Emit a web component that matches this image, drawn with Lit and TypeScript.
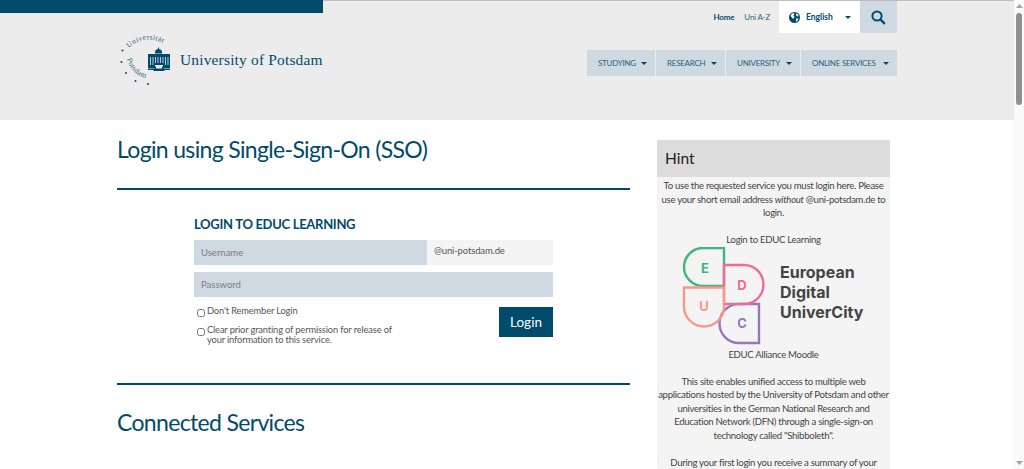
import { LitElement, css, html, svg } from 'lit'
import { customElement } from 'lit/decorators.js'

const caret = html`<svg class="caret" width="6" height="3" viewBox="0 0 6 3"><path d="M0 0h6L3 3z" /></svg>`

const sealLogo = svg`
  <defs>
    <path id="arc-top" d="M12 20 A28 28 0 0 1 50 18" />
    <path id="arc-bottom" d="M10 31 A26 26 0 0 0 34 51" />
  </defs>
  <text class="seal-text"><textPath href="#arc-top">Universität</textPath></text>
  <text class="seal-text"><textPath href="#arc-bottom">Potsdam</textPath></text>
  <g fill="#004a6c">
    <circle cx="5.500" cy="22.500" r="1" />
    <circle cx="4.500" cy="34" r="1" />
    <circle cx="9" cy="45" r="1" />
    <circle cx="18.500" cy="53" r="1" />
    <circle cx="31" cy="56" r="1" />
    <path d="M38 25.500h7v-1a3.500 3.500 0 0 0-3-3.500v-1.500h-1V21a3.500 3.500 0 0 0-3 3.500z" />
    <path d="M31 26h22v14h-7v-3h-8v3h-7z" />
    <path d="M31 40.500h6.500v-2H39v2h6v-2h1.500v2H53V42h-5l-1 1h-10l-1-1h-5z" />
  </g>
  <g stroke="#ececec" stroke-width=".8">
    <path d="M33.500 29v8M36 29v8M38.500 29v6M41 29v6M43.500 29v6M46 29v6M48.500 29v8M51 29v8" />
  </g>
`

const educLogo = svg`
  <g fill="none" stroke-width="2.400">
    <path stroke="#9577c0" d="M759 304v39h-20a19.500 19.500 0 0 1 0-39z" />
    <path stroke="#3fb67f" d="M724 248v38h-21a19 19 0 0 1 0-38z" />
    <path stroke="#ee6b96" d="M724 265h20a19.500 19.500 0 0 1 0 39h-20z" />
    <path stroke="#f79a83" d="M684 287.500h40v19a20 20 0 0 1-40 0z" />
  </g>
  <text class="educ-letter" x="705" y="273" fill="#3fb67f">E</text>
  <text class="educ-letter" x="742" y="290" fill="#ee6b96">D</text>
  <text class="educ-letter" x="704" y="311" fill="#f79a83">U</text>
  <text class="educ-letter" x="742" y="328" fill="#9577c0">C</text>
`

@customElement('app-root')
export class AppRoot extends LitElement {
  render() {
    const nav = ['Studying', 'Research', 'University', 'Online Services']
    return html`
      <div class="page">
        <div class="content">
          <header class="site-header">
            <div class="top-line"><div class="top-bar"></div></div>
            <div class="header-inner">
              <div class="brand">
                <svg class="seal" width="56" height="60" viewBox="0 0 56 60">${sealLogo}</svg>
                <span class="brand-name">University of Potsdam</span>
              </div>
              <div class="header-right">
                <div class="meta-row">
                  <a class="meta-link home">Home</a>
                  <a class="meta-link">Uni A-Z</a>
                  <div class="lang">
                    <svg width="11" height="11" viewBox="0 0 11 11">
                      <circle cx="5.500" cy="5.500" r="5.500" fill="#004a6c" />
                      <path fill="#fff" d="M2.500 2l2-1 1 1-1 1.500L5.500 5 4 7 2.500 5 1.500 4zM7 1.500l2 1 .5 1.500-1.500.5-1-1.500zM7 6.500h2.500L8 9.500H7z" />
                    </svg>
                    <span>English</span>
                    ${caret}
                  </div>
                  <div class="search">
                    <svg width="15" height="15" viewBox="0 0 15 15" fill="none" stroke="#004a6c">
                      <circle cx="6" cy="6" r="4.600" stroke-width="2" />
                      <path d="M9.500 9.500l4.300 4.300" stroke-width="2.400" />
                    </svg>
                  </div>
                </div>
                <nav class="main-nav">
                  ${nav.map((item) => html`<a class="nav-item">${item}${caret}</a>`)}
                </nav>
              </div>
            </div>
          </header>

          <div class="columns">
            <main class="main-col">
              <h1>Login using Single-Sign-On (SSO)</h1>
              <hr />
              <form class="login">
                <h2>Login to EDUC Learning</h2>
                <div class="user-row">
                  <div class="field grow">Username</div>
                  <div class="domain">@uni-potsdam.de</div>
                </div>
                <div class="field">Password</div>
                <div class="form-foot">
                  <div class="options">
                    <label><input type="checkbox" /><span>Don't Remember Login</span></label>
                    <label><input type="checkbox" /><span>Clear prior granting of permission for release of your information to this service.</span></label>
                  </div>
                  <button type="button">Login</button>
                </div>
              </form>
              <hr class="second" />
              <h1 class="services">Connected Services</h1>
            </main>

            <aside class="hint">
              <h3>Hint</h3>
              <div class="hint-body">
                <p>To use the requested service you must login here. Please use your short email address <em>without</em> @uni-potsdam.de to login.</p>
                <p class="gap">Login to EDUC Learning</p>
                <div class="educ">
                  <svg width="85" height="98" viewBox="680 247 85 98">${educLogo}</svg>
                  <div class="educ-name">European<br />Digital<br />UniverCity</div>
                </div>
                <p>EDUC Alliance Moodle</p>
                <p class="gap">This site enables unified access to multiple web applications hosted by the University of Potsdam and other universities in the German National Research and Education Network (DFN) through a single-sign-on technology called "Shibboleth".</p>
                <p class="gap">During your first login you receive a summary of your</p>
              </div>
            </aside>
          </div>
        </div>

        <div class="scrollbar">
          <svg width="7" height="4" viewBox="0 0 7 4"><path d="M0 4L3.500 0 7 4z" fill="#a3a3a3" /></svg>
          <div class="thumb"></div>
          <svg class="down" width="7" height="4" viewBox="0 0 7 4"><path d="M0 0h7L3.500 4z" fill="#a3a3a3" /></svg>
        </div>
      </div>
    `
  }

  static styles = css`
    :host {
      display: block;
      width: 1024px;
      height: 469px;
      overflow: hidden;
      font-family: Lato, "Noto Sans", sans-serif;
      color: #444;
      background: #fff;
    }

    .page {
      display: flex;
      height: 469px;
    }

    .content {
      flex: 1;
      min-width: 0;
      height: 469px;
      overflow: hidden;
    }

    .site-header {
      height: 120px;
      background: #ececec;
    }

    .top-line {
      height: 1px;
      background: #bdbdbd;
    }

    .top-bar {
      width: 323px;
      height: 13px;
      background: #004a6c;
    }

    .header-inner {
      display: flex;
      justify-content: space-between;
      width: 780px;
      margin-left: 117px;
    }

    .brand {
      display: flex;
      align-items: center;
      gap: 7px;
      height: 60px;
      margin-top: 27px;
    }

    .seal {
      flex: none;
    }

    .seal-text {
      font: 7.500px "Liberation Serif", serif;
      fill: #2c5f7b;
      letter-spacing: 0.3px;
    }

    .brand-name {
      margin-top: 4px;
      font: 15.400px "Liberation Serif", serif;
      color: #004a6c;
      letter-spacing: 0.2px;
    }

    .header-right {
      display: flex;
      flex-direction: column;
      align-items: flex-end;
    }

    .meta-row {
      display: flex;
      align-items: center;
      height: 32px;
    }

    .meta-link {
      margin-right: 9px;
      font-size: 8px;
      letter-spacing: -0.2px;
      color: #2c5f7b;
    }

    .meta-link.home {
      margin-right: 10px;
      font-weight: 700;
      color: #004a6c;
    }

    .lang {
      display: flex;
      align-items: center;
      width: 81px;
      height: 32px;
      box-sizing: border-box;
      padding-left: 10px;
      background: #fff;
      font-size: 8.500px;
      font-weight: 700;
      color: #004a6c;
    }

    .lang span {
      margin: 0 12px 0 6px;
    }

    .search {
      display: flex;
      align-items: center;
      justify-content: center;
      width: 37px;
      height: 32px;
      background: #cfd9e2;
    }

    .caret {
      flex: none;
      fill: #004a6c;
    }

    .main-nav {
      display: flex;
      gap: 1px;
      margin-top: 17px;
    }

    .nav-item {
      display: flex;
      align-items: center;
      justify-content: space-between;
      height: 26px;
      box-sizing: border-box;
      padding: 0 8px 0 11px;
      background: #cfd9e2;
      font-size: 8px;
      letter-spacing: -0.25px;
      white-space: nowrap;
      text-transform: uppercase;
      color: #2c5f7b;
    }

    .nav-item:nth-child(1) { width: 68px; }
    .nav-item:nth-child(2) { width: 69px; }
    .nav-item:nth-child(3) { width: 74px; }
    .nav-item:nth-child(4) { width: 96px; }

    .columns {
      display: flex;
      gap: 27px;
      width: 773px;
      margin-left: 117px;
    }

    .main-col {
      width: 513px;
      flex: none;
    }

    h1 {
      margin: 14px 0 0;
      font-size: 23px;
      line-height: 30px;
      font-weight: 400;
      letter-spacing: -0.66px;
      color: #004a6c;
    }

    hr {
      height: 2px;
      margin: 24px 0 0;
      border: 0;
      background: #004a6c;
    }

    h1.services {
      margin-top: 22px;
    }

    .login {
      display: flex;
      flex-direction: column;
      width: 359px;
      margin: 0 0 0 77px;
      padding-top: 26px;
    }

    h2 {
      margin: 0 0 7px;
      font-size: 13px;
      line-height: 17px;
      font-weight: 700;
      letter-spacing: -0.3px;
      text-transform: uppercase;
      color: #004a6c;
    }

    .user-row {
      display: flex;
      margin-bottom: 7px;
    }

    .field {
      height: 25px;
      padding-left: 7px;
      background: #cfd9e2;
      font-size: 9.500px;
      line-height: 26px;
      color: #7c7c7c;
    }

    .field.grow {
      flex: none;
      width: 226px;
    }

    .domain {
      flex: 1;
      height: 25px;
      padding-left: 7px;
      background: #f4f4f4;
      font-size: 9.500px;
      letter-spacing: -0.15px;
      line-height: 22px;
      color: #555;
    }

    .form-foot {
      display: flex;
      justify-content: space-between;
      margin-top: 10px;
    }

    .options {
      display: flex;
      flex-direction: column;
      gap: 8px;
      width: 199px;
      margin-top: -1px;
      padding-left: 3px;
      font-size: 9.300px;
      letter-spacing: -0.14px;
      line-height: 10px;
      color: #555;
    }

    label {
      display: flex;
      align-items: flex-start;
      gap: 2px;
    }

    input {
      flex: none;
      width: 8px;
      height: 8px;
      margin: 3px 0 0;
    }

    button {
      width: 54px;
      height: 30px;
      padding: 0;
      border: 0;
      background: #004a6c;
      font: 13.500px Lato, sans-serif;
      color: #fff;
    }

    hr.second {
      margin-top: 38px;
    }

    .hint {
      width: 233px;
      flex: none;
      margin-top: 20px;
      background: #f4f4f4;
      height: 329px;
      overflow: hidden;
    }

    h3 {
      height: 37px;
      margin: 0;
      padding-left: 8px;
      background: #dcdcdc;
      font-size: 15.500px;
      line-height: 37px;
      font-weight: 400;
      color: #222;
    }

    .hint-body {
      padding: 2px 1px 0;
      text-align: center;
      font-size: 9.600px;
      letter-spacing: -0.3px;
      line-height: 13.500px;
      color: #444;
    }

    p {
      margin: 0;
    }

    p.gap {
      margin-top: 13.500px;
    }

    .educ {
      display: flex;
      align-items: flex-start;
      margin: 0 0 3px 22px;
      text-align: left;
      letter-spacing: 0;
    }

    .educ svg {
      flex: none;
    }

    .educ-letter {
      font: 700 13px Inter, sans-serif;
      text-anchor: middle;
    }

    .educ-name {
      margin: 15px 0 0 15px;
      font: 700 16px/20px Inter, sans-serif;
      color: #444;
    }

    .scrollbar {
      display: flex;
      flex-direction: column;
      align-items: center;
      flex: none;
      width: 10px;
      padding-top: 4px;
      box-sizing: border-box;
      background: #fafafa;
    }

    .thumb {
      width: 6px;
      height: 92px;
      margin-top: 5px;
      border-radius: 3px;
      background: #8f8f8f;
    }

    .down {
      margin-top: auto;
      margin-bottom: 4px;
    }
  `
}

declare global {
  interface HTMLElementTagNameMap {
    'app-root': AppRoot
  }
}
